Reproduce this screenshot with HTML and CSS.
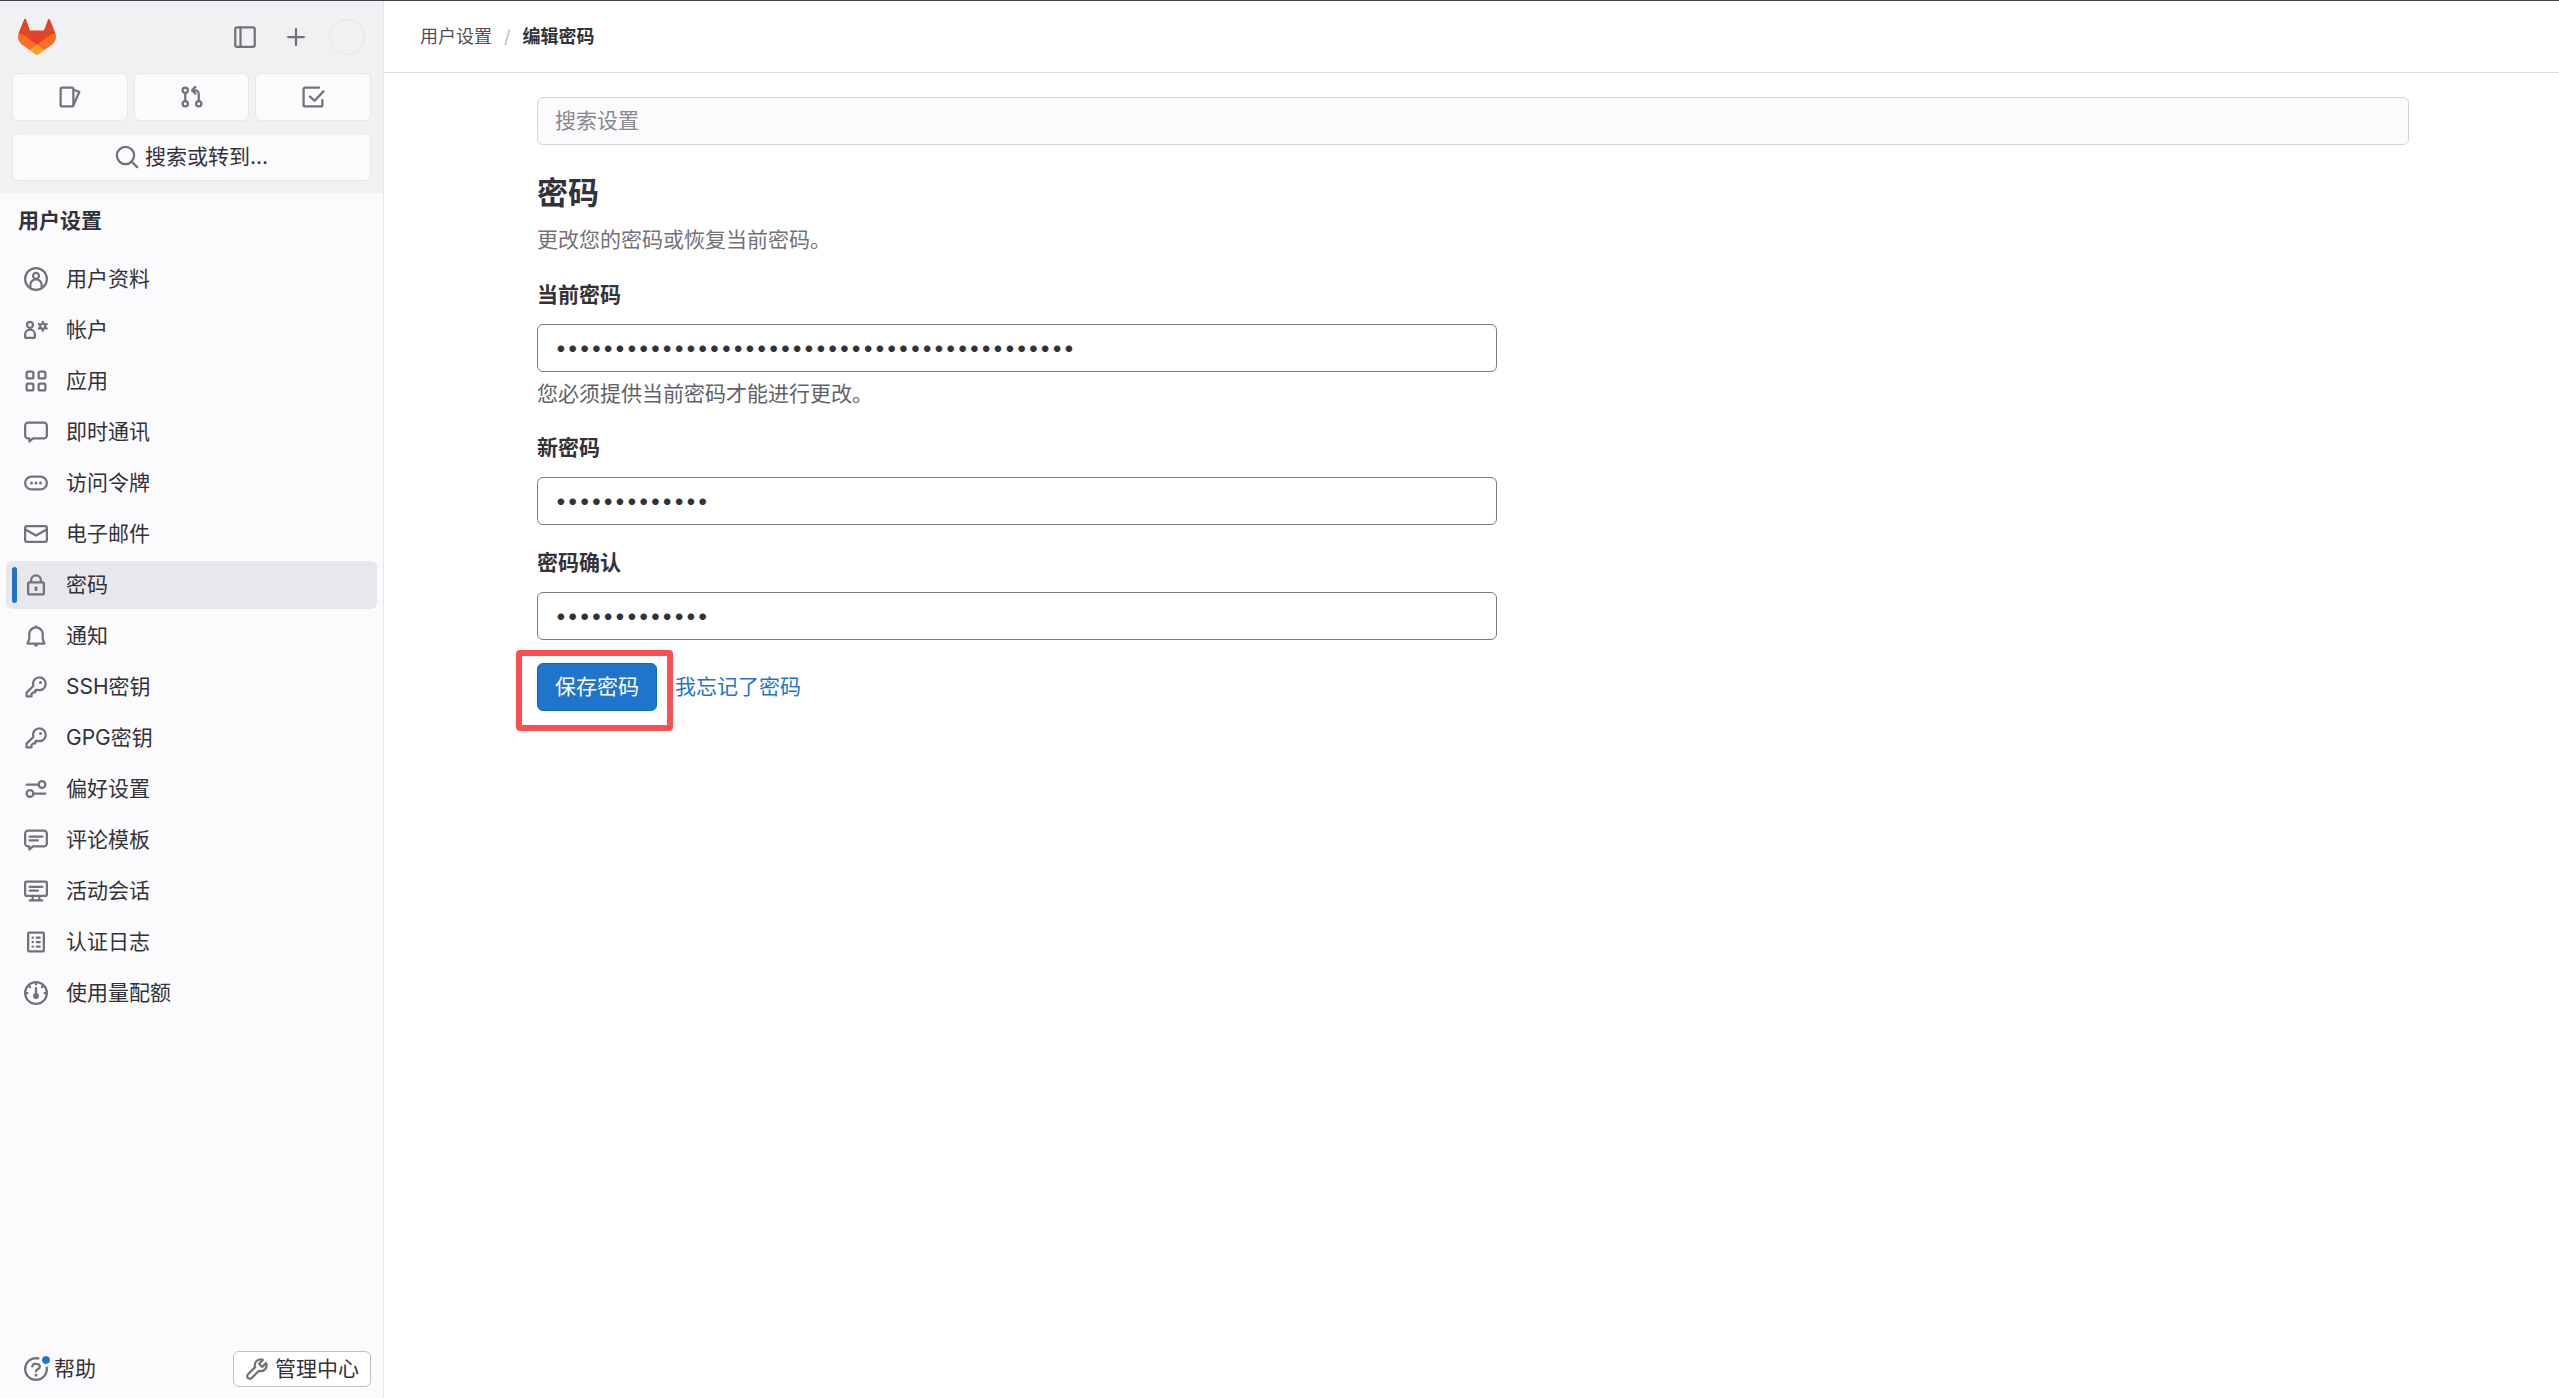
FILE: index.html
```html
<!DOCTYPE html>
<html lang="zh-CN">
<head>
    <meta charset="UTF-8">
    <meta name="viewport" content="width=device-width, initial-scale=1.0">
    <title>编辑密码 · 用户设置 · GitLab</title>
    <link rel="stylesheet" href="styles.css">
</head>
<body>
    <div class="layout">
        <aside class="sidebar">
            <div class="user-bar">
                <div class="user-bar-top">
                    <a href="#" class="brand" aria-label="GitLab">
                        <svg width="38" height="36" viewBox="0 0 38 36">
                            <path fill="#e24329" d="M37.4 14.2 32 .7a1.1 1.1 0 0 0-2.1.2L26 11.500H12L8.200 .9A1.100 1.100 0 0 0 6 .7L.6 14.200l9 9L19 26l9.400-3z"/>
                            <path fill="#fc6d26" d="M37.400 14.200a15 15 0 0 0-7 3L19 26l7.200 5.300 5.700-4.200a10.500 10.500 0 0 0 5.500-12.900zM.6 14.200a10.500 10.500 0 0 0 5.500 12.900l5.700 4.200L19 26 7.600 17.200a15 15 0 0 0-7-3z"/>
                            <path fill="#fca326" d="m11.800 31.300 5.900 4.200a2 2 0 0 0 2.600 0l5.900-4.200L19 26z"/>
                        </svg>
                    </a>
                    <div class="user-bar-actions">
                        <button class="icon-btn" type="button" aria-label="侧边栏">
                            <svg class="icon" viewBox="0 0 16 16"><rect x="1.500" y="1.500" width="13" height="13" rx="1.250"/><path d="M5 1.500v13"/></svg>
                        </button>
                        <button class="icon-btn" type="button" aria-label="新建">
                            <svg class="icon" viewBox="0 0 16 16"><path d="M8 2.750v10.500M2.750 8h10.500"/></svg>
                        </button>
                        <button class="avatar" type="button" aria-label="用户菜单"></button>
                    </div>
                </div>
                <div class="counters">
                    <a href="#" class="tile" aria-label="议题">
                        <svg class="icon" viewBox="0 0 16 16"><rect x="1.750" y="1.750" width="8.500" height="12.500" rx="1"/><path d="m10.500 3.200 3.700 1.500-3.700 8.300"/></svg>
                    </a>
                    <a href="#" class="tile" aria-label="合并请求">
                        <svg class="icon" viewBox="0 0 16 16"><circle cx="3.500" cy="3.500" r="1.750"/><circle cx="3.500" cy="12.500" r="1.750"/><circle cx="12.500" cy="12.500" r="1.750"/><path d="M3.500 5.250v5.500M12.500 10.750V6a2.500 2.500 0 0 0-2.500-2.500H8.500M10.250 1.250 8 3.500l2.250 2.250"/></svg>
                    </a>
                    <a href="#" class="tile" aria-label="待办事项">
                        <svg class="icon" viewBox="0 0 16 16"><path d="M12 1.750H2.750a1 1 0 0 0-1 1v10.500a1 1 0 0 0 1 1h10.500a1 1 0 0 0 1-1V10M6 7.750l3 2.750 6-6.250"/></svg>
                    </a>
                </div>
                <button class="tile tile-search" type="button">
                    <svg class="icon" viewBox="0 0 16 16"><circle cx="7" cy="7" r="5.750"/><path d="m11 11 3.750 3.750"/></svg>
                    <span>搜索或转到...</span>
                </button>
            </div>

            <nav class="menu" aria-label="用户设置">
                <h2 class="menu-title">用户设置</h2>
                <a href="#" class="menu-item">
                    <svg class="icon" viewBox="0 0 16 16"><circle cx="8" cy="8" r="7.250"/><circle cx="8" cy="5.900" r="2"/><path d="M4.200 13.800V12a3.800 3.800 0 0 1 7.600 0v1.800"/></svg>
                    <span>用户资料</span>
                </a>
                <a href="#" class="menu-item">
                    <svg class="icon" viewBox="0 0 16 16"><circle cx="4" cy="4.500" r="2"/><path d="M.75 11a3.250 3.250 0 0 1 6.500 0v1.250a1 1 0 0 1-1 1h-4.500a1 1 0 0 1-1-1z"/><circle cx="12.500" cy="5.500" r="1.700"/><path d="M12.500 2.500v1M12.500 7.500v1M9.900 4l.9.500M14.200 6.500l.9.500M9.900 7l.9-.5M14.200 4.500l.9-.5"/></svg>
                    <span>帐户</span>
                </a>
                <a href="#" class="menu-item">
                    <svg class="icon" viewBox="0 0 16 16"><rect x="1.750" y="1.750" width="4.500" height="4.500" rx="1"/><rect x="9.750" y="1.750" width="4.500" height="4.500" rx="1"/><rect x="1.750" y="9.750" width="4.500" height="4.500" rx="1"/><rect x="9.750" y="9.750" width="4.500" height="4.500" rx="1"/></svg>
                    <span>应用</span>
                </a>
                <a href="#" class="menu-item">
                    <svg class="icon" viewBox="0 0 16 16"><path d="M2.750 1.750h10.500a2 2 0 0 1 2 2v6.500a2 2 0 0 1-2 2H6L3.600 14.300v-2.050h-.85a2 2 0 0 1-2-2v-6.500a2 2 0 0 1 2-2z"/></svg>
                    <span>即时通讯</span>
                </a>
                <a href="#" class="menu-item">
                    <svg class="icon" viewBox="0 0 16 16"><rect x=".75" y="3.750" width="14.500" height="8.500" rx="4.250"/><g class="solid"><circle cx="5" cy="8" r="1"/><circle cx="8" cy="8" r="1"/><circle cx="11" cy="8" r="1"/></g></svg>
                    <span>访问令牌</span>
                </a>
                <a href="#" class="menu-item">
                    <svg class="icon" viewBox="0 0 16 16"><rect x=".75" y="2.750" width="14.500" height="10.500" rx="1.250"/><path d="m1 5 7 4 7-4"/></svg>
                    <span>电子邮件</span>
                </a>
                <a href="#" class="menu-item active" aria-current="page">
                    <svg class="icon" viewBox="0 0 16 16"><rect x="2.750" y="6.250" width="10.500" height="8" rx=".75"/><path d="M4.750 6V4.750a3.250 3.250 0 0 1 6.500 0V6"/><rect class="solid" x="7.100" y="9" width="1.800" height="3" rx=".5"/></svg>
                    <span>密码</span>
                </a>
                <a href="#" class="menu-item">
                    <svg class="icon" viewBox="0 0 16 16"><path d="M8 2.250a4.500 4.500 0 0 0-4.500 4.500V10L2.400 13h11.200l-1.100-3V6.750A4.500 4.500 0 0 0 8 2.250zM8 1.500v.75M7.500 14.200h1"/></svg>
                    <span>通知</span>
                </a>
                <a href="#" class="menu-item">
                    <svg class="icon" viewBox="0 0 16 16"><path d="M6.200 7.300a4.250 4.250 0 1 1 2.600 2.600L7.600 10v1.500H6.200L5 12.800v1.450H1.750v-2.500z"/><circle class="solid" cx="11" cy="5" r="1"/></svg>
                    <span>SSH密钥</span>
                </a>
                <a href="#" class="menu-item">
                    <svg class="icon" viewBox="0 0 16 16"><path d="M6.200 7.300a4.250 4.250 0 1 1 2.600 2.600L7.600 10v1.500H6.200L5 12.800v1.450H1.750v-2.500z"/><circle class="solid" cx="11" cy="5" r="1"/></svg>
                    <span>GPG密钥</span>
                </a>
                <a href="#" class="menu-item">
                    <svg class="icon" viewBox="0 0 16 16"><path d="M1.750 5h8M6.250 11h8"/><circle cx="12" cy="5" r="2.250"/><circle cx="4" cy="11" r="2.250"/></svg>
                    <span>偏好设置</span>
                </a>
                <a href="#" class="menu-item">
                    <svg class="icon" viewBox="0 0 16 16"><path d="M2.750 1.750h10.500a2 2 0 0 1 2 2v6.500a2 2 0 0 1-2 2H6L3.600 14.300v-2.050h-.85a2 2 0 0 1-2-2v-6.500a2 2 0 0 1 2-2zM3.750 5.750h8.500M3.750 8.250h5.500"/></svg>
                    <span>评论模板</span>
                </a>
                <a href="#" class="menu-item">
                    <svg class="icon" viewBox="0 0 16 16"><rect x=".75" y="1.750" width="14.500" height="9.500" rx=".75"/><path d="M3.750 5.250h8.500M3.750 7.750h5.500M5.750 11.250v2.500M10.250 11.250v2.500M3.750 14.250h8.500"/></svg>
                    <span>活动会话</span>
                </a>
                <a href="#" class="menu-item">
                    <svg class="icon" viewBox="0 0 16 16"><rect x="2.750" y="1.750" width="10.500" height="12.500" rx=".75"/><path d="M5.700 5h.3M5.700 8h.3M5.700 11h.3M8.500 5h2M8.500 8h2M8.500 11h2"/></svg>
                    <span>认证日志</span>
                </a>
                <a href="#" class="menu-item">
                    <svg class="icon" viewBox="0 0 16 16"><circle cx="8" cy="8" r="7.250"/><path d="M8 4.750V10M8 1v1.250M1 8h1.250M13.750 8H15M3.200 3.200l.9.900M12.800 3.200l-.9.900"/><circle class="solid" cx="8" cy="10" r="2"/></svg>
                    <span>使用量配额</span>
                </a>
            </nav>

            <div class="sidebar-footer">
                <button class="help-btn" type="button">
                    <span class="help-icon">
                        <svg class="icon" viewBox="0 0 16 16"><circle cx="8" cy="8" r="7.250"/><path d="M5.500 6.300A2.400 2.400 0 0 1 8 4.500c1.500 0 2.600.8 2.600 2C10.600 8.100 8 8 8 9.600"/><circle class="solid" cx="8" cy="12" r="1"/></svg>
                    </span>
                    <span>帮助</span>
                </button>
                <a href="#" class="admin-btn">
                    <svg class="icon" viewBox="0 0 16 16"><path d="M11.900 1.950a3.800 3.800 0 0 0-5.100 4.800L2 11.550a1.700 1.700 0 0 0 2.450 2.450l4.800-4.800a3.800 3.800 0 0 0 4.800-5.100L11.500 6.600 9.400 4.500z"/></svg>
                    <span>管理中心</span>
                </a>
            </div>
        </aside>

        <main class="main">
            <header class="top-bar">
                <nav aria-label="面包屑">
                    <ol class="breadcrumbs">
                        <li><a href="#">用户设置</a></li>
                        <li><a href="#" aria-current="page">编辑密码</a></li>
                    </ol>
                </nav>
            </header>

            <div class="content">
                <input class="settings-search" type="search" placeholder="搜索设置" aria-label="搜索设置">

                <h1>密码</h1>
                <p class="description">更改您的密码或恢复当前密码。</p>

                <form class="password-form">
                    <div class="form-group">
                        <label for="current-password">当前密码</label>
                        <input id="current-password" type="password" value="xxxxxxxxxxxxxxxxxxxxxxxxxxxxxxxxxxxxxxxxxxxx">
                        <p class="form-text">您必须提供当前密码才能进行更改。</p>
                    </div>
                    <div class="form-group">
                        <label for="new-password">新密码</label>
                        <input id="new-password" type="password" value="xxxxxxxxxxxxx">
                    </div>
                    <div class="form-group">
                        <label for="confirm-password">密码确认</label>
                        <input id="confirm-password" type="password" value="xxxxxxxxxxxxx">
                    </div>
                    <div class="form-actions">
                        <span class="highlight"><button class="save-btn" type="button">保存密码</button></span>
                        <a href="#" class="forgot-link">我忘记了密码</a>
                    </div>
                </form>
            </div>
        </main>
    </div>
</body>
</html>
```

FILE: styles.css
```css
* {
    box-sizing: border-box;
}
body {
    margin: 0;
    background: #fff;
    color: #333238;
    font-family: Inter, "Noto Sans CJK SC", sans-serif;
    font-size: 21px;
    line-height: 32px;
}
button, input {
    font: inherit;
    color: inherit;
}
button {
    cursor: pointer;
}
a {
    color: inherit;
    text-decoration: none;
}
.layout {
    display: flex;
    min-height: 100vh;
    border-top: 1px solid #434248;
}

/* icons */
.icon {
    display: block;
    flex: none;
    width: 24px;
    height: 24px;
    fill: none;
    stroke: #737278;
    stroke-width: 1.5;
    stroke-linecap: round;
    stroke-linejoin: round;
}
.solid {
    fill: #737278;
    stroke: none;
}

/* sidebar */
.sidebar {
    display: flex;
    flex-direction: column;
    flex: none;
    width: 384px;
    background: #fbfafd;
    border-right: 1px solid #e7e7ea;
}
.user-bar {
    display: flex;
    flex-direction: column;
    gap: 12px;
    padding: 12px;
    background: #f1f0f3;
}
.user-bar-top {
    display: flex;
    align-items: center;
    justify-content: space-between;
    height: 48px;
    padding: 0 6px;
}
.brand svg {
    display: block;
}
.user-bar-actions {
    display: flex;
    align-items: center;
    gap: 3px;
}
.icon-btn {
    display: flex;
    align-items: center;
    justify-content: center;
    width: 48px;
    height: 48px;
    padding: 0;
    border: none;
    background: none;
}
.avatar {
    width: 36px;
    height: 36px;
    margin-left: 6px;
    padding: 0;
    border: 1px solid #e4e3e7;
    border-radius: 50%;
    background: none;
}
.counters {
    display: flex;
    gap: 6px;
}
.tile {
    display: flex;
    flex: 1;
    align-items: center;
    justify-content: center;
    gap: 6px;
    height: 48px;
    padding: 0;
    border: 1px solid #e7e6ea;
    border-radius: 6px;
    background: #fbfafd;
}
.tile-search {
    flex: none;
}
.menu {
    flex: 1;
    padding: 6px;
}
.menu-title {
    margin: 0 0 14px;
    padding: 6px 12px 4px;
    font-size: 21px;
    font-weight: 600;
    line-height: 32px;
}
.menu-item {
    position: relative;
    display: flex;
    align-items: center;
    gap: 18px;
    height: 48px;
    margin-bottom: 3px;
    padding: 0 18px;
    border-radius: 6px;
}
.menu-item.active {
    background: #e8e7eb;
}
.menu-item.active::before {
    content: "";
    position: absolute;
    top: 6px;
    bottom: 6px;
    left: 6px;
    width: 5px;
    border-radius: 3px;
    background: #1f75cb;
}
.sidebar-footer {
    display: flex;
    align-items: center;
    justify-content: space-between;
    padding: 11px 12px;
}
.help-btn {
    display: flex;
    align-items: center;
    gap: 6px;
    padding: 0 12px;
    border: none;
    background: none;
}
.help-icon {
    position: relative;
}
.help-icon::after {
    content: "";
    position: absolute;
    top: -4px;
    right: -5px;
    width: 8px;
    height: 8px;
    border: 3px solid #fbfafd;
    border-radius: 50%;
    background: #1f75cb;
    background-clip: padding-box;
    box-sizing: content-box;
}
.admin-btn {
    display: flex;
    align-items: center;
    gap: 6px;
    height: 36px;
    padding: 0 11px;
    border: 1px solid #bfbfc3;
    border-radius: 6px;
    background: #fff;
}

/* main */
.main {
    flex: 1;
    min-width: 0;
}
.top-bar {
    display: flex;
    align-items: center;
    height: 72px;
    padding: 0 36px;
    border-bottom: 1px solid #dcdcde;
}
.breadcrumbs {
    display: flex;
    margin: 0;
    padding: 0;
    list-style: none;
    font-size: 18px;
    color: #535158;
}
.breadcrumbs li + li {
    color: #333238;
    font-weight: 600;
}
.breadcrumbs li + li::before {
    content: "/";
    padding: 0 12px;
    color: #bfbfc3;
    font-weight: 400;
}
.content {
    max-width: 1923px;
    margin: 0 auto;
    padding: 24px 24px 24px 27px;
}
.settings-search {
    display: block;
    width: 100%;
    height: 48px;
    padding: 0 17px 2px;
    border: 1px solid #d4d4d7;
    border-radius: 6px;
    background: #fbfafd;
    appearance: none;
}
.settings-search::placeholder {
    color: #89888d;
}
h1 {
    margin: 28px 0 11px;
    font-size: 31px;
    font-weight: 600;
    line-height: 40px;
}
.description {
    margin: 0 0 24px;
    color: #737278;
}
.password-form {
    max-width: 960px;
}
.form-group {
    margin-bottom: 23px;
}
.form-group label {
    display: block;
    margin-bottom: 14px;
    font-weight: 600;
    line-height: 30px;
}
.form-group input {
    display: block;
    width: 100%;
    height: 48px;
    padding: 0 17px 2px;
    border: 1px solid #7b7a80;
    border-radius: 6px;
    background: #fff;
}
.form-text {
    margin: 6px 0 0;
    color: #626168;
}
.form-actions {
    display: flex;
    align-items: center;
    gap: 18px;
}
.highlight {
    position: relative;
}
.highlight::after {
    content: "";
    position: absolute;
    top: -13px;
    right: -16px;
    bottom: -20px;
    left: -21px;
    border: 6px solid #fc5050;
    border-radius: 4px;
    pointer-events: none;
}
.save-btn {
    display: block;
    height: 48px;
    padding: 0 17px;
    border: 1px solid #1068bf;
    border-radius: 6px;
    background: #1f75cb;
    color: #fff;
}
.forgot-link {
    color: #1f75cb;
}
```
